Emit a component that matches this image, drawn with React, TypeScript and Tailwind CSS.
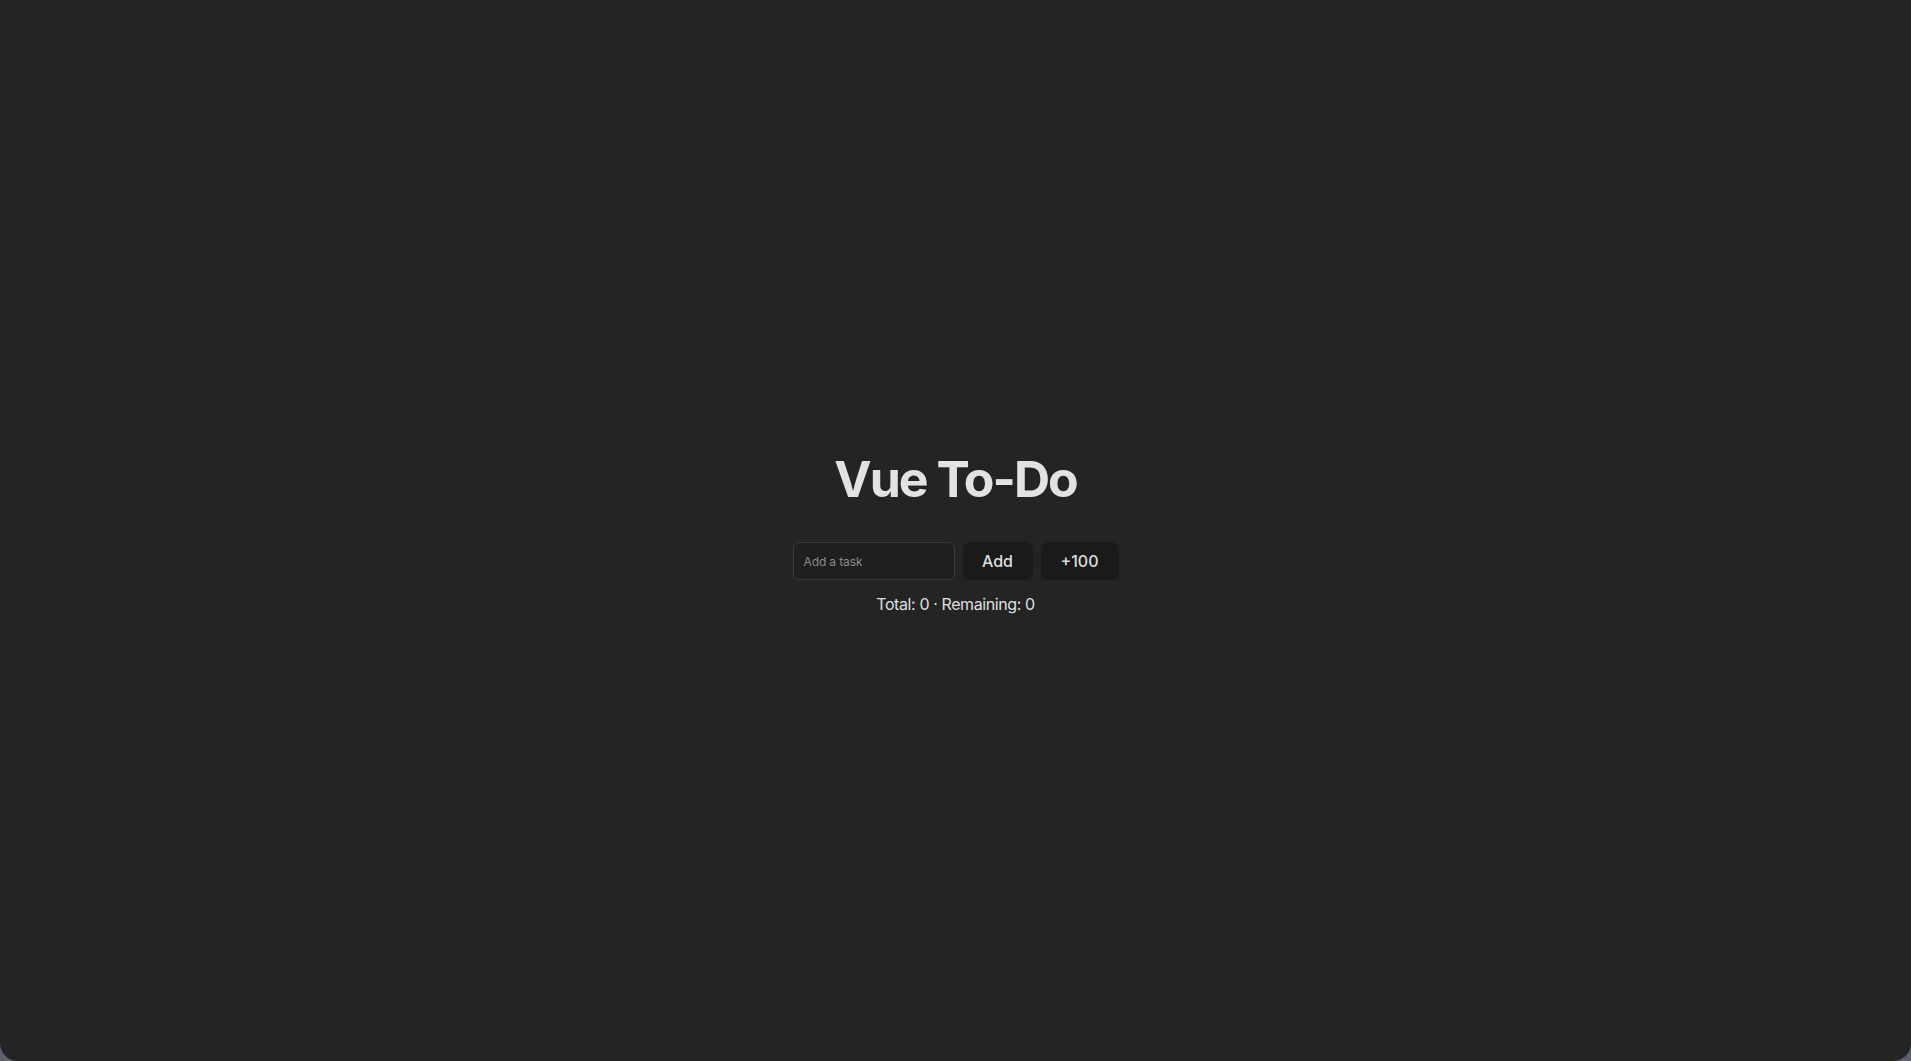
import { useState } from "react";

const App = () => {
  const [tasks, setTasks] = useState<{ text: string; done: boolean }[]>([]);
  const [text, setText] = useState("");

  const add = () => {
    if (!text.trim()) return;
    setTasks([...tasks, { text, done: false }]);
    setText("");
  };

  const remaining = tasks.filter((t) => !t.done).length;

  return (
    <div className="h-screen bg-[#5d5f6e]">
      <div
        className="h-full rounded-b-[18px] bg-[#242424] flex flex-col items-center justify-center pt-[6px] text-[rgba(255,255,255,0.87)]"
        style={{ fontFamily: "Inter, 'Noto Sans', sans-serif" }}
      >
        <h1 className="text-[50px] leading-[1.1] font-bold tracking-[-0.04em]">Vue To-Do</h1>
        <div className="mt-[35px] flex gap-2">
          <input
            value={text}
            onChange={(e) => setText(e.target.value)}
            placeholder="Add a task"
            className="w-[162px] h-[38px] rounded-md border border-[#3b3b3b] bg-[#1f1f1f] px-[10px] pt-[1px] text-[12px] tracking-[-0.01em] text-[#e0e0e0] placeholder:text-[#8c8c8c] outline-none"
          />
          <button
            onClick={add}
            className="h-[38px] w-[70px] rounded-lg bg-[#1a1a1a] text-base font-medium"
          >
            Add
          </button>
          <button className="h-[38px] w-[78px] rounded-lg bg-[#1a1a1a] text-base font-medium">
            +100
          </button>
        </div>
        <p className="mt-3 text-base leading-6 tracking-[-0.025em]">
          Total: {tasks.length} · Remaining: {remaining}
        </p>
      </div>
    </div>
  );
};

export default App;
